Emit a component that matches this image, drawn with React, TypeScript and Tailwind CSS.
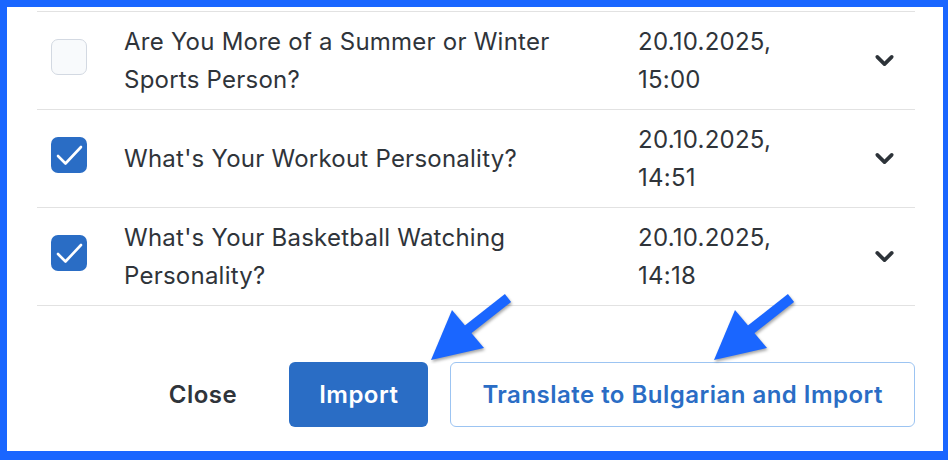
import { ChevronDown } from "lucide-react";

type Quiz = {
  title: string;
  date: string;
  time: string;
  checked: boolean;
};

const quizzes: Quiz[] = [
  { title: "Are You More of a Summer or Winter Sports Person?", date: "20.10.2025,", time: "15:00", checked: false },
  { title: "What's Your Workout Personality?", date: "20.10.2025,", time: "14:51", checked: true },
  { title: "What's Your Basketball Watching Personality?", date: "20.10.2025,", time: "14:18", checked: true },
];

function Checkbox({ checked }: { checked: boolean }) {
  if (!checked) {
    return <div className="w-[36px] h-[36px] rounded-[7px] border border-[#d3d9e2] bg-[#f8fafc]" />;
  }
  return (
    <div className="w-[36px] h-[36px] rounded-[7px] bg-[#2a6dc5]">
      <svg width="36" height="36" viewBox="0 0 36 36" fill="none">
        <path d="M7 19l7.5 7.5L30 10" stroke="white" strokeWidth="2.6" strokeLinecap="round" strokeLinejoin="round" />
      </svg>
    </div>
  );
}

function Arrow({ className }: { className: string }) {
  return (
    <svg className={className} width="90" height="72" viewBox="0 0 90 72" fill="none">
      <g style={{ filter: "drop-shadow(1px 2px 1.5px rgba(0,0,0,0.35))" }}>
        <line x1="80" y1="6" x2="38" y2="39" stroke="#1a66ff" strokeWidth="10" />
        <polygon points="3,68 24,18 56,56" fill="#1a66ff" />
      </g>
    </svg>
  );
}

export default function App() {
  return (
    <div
      className="w-[948px] h-[460px] bg-[#1a66ff] pt-[7px] pl-[7px] pr-[5px] pb-[9px]"
      style={{ fontFamily: "Inter, 'Noto Sans', sans-serif" }}
    >
      <div className="relative h-full bg-white pl-[30px] pr-[28px] pt-[4px] overflow-hidden">
        <div className="border-t border-[#e2e2e2]">
          {quizzes.map((q) => (
            <div
              key={q.title}
              className="flex items-center h-[98px] border-b border-[#e2e2e2] text-[#2f343a] text-[24px] leading-[38px] tracking-[0.01em]"
            >
              <div className="w-[87px] pl-[14px] shrink-0 -mt-[8px]">
                <Checkbox checked={q.checked} />
              </div>
              <div className="w-[514px] shrink-0 pr-[36px]">{q.title}</div>
              <div className="flex-1">
                <div>{q.date}</div>
                <div>{q.time}</div>
              </div>
              <div className="pr-[16px]">
                <ChevronDown size={29} strokeWidth={3} className="text-[#2d3339]" />
              </div>
            </div>
          ))}
        </div>

        <div className="flex justify-end gap-[22px] mt-[56px] text-[24px] font-semibold tracking-[0.02em]">
          <button type="button" className="h-[65px] px-[30px] rounded-[6px] text-[#2f343a]">
            Close
          </button>
          <button type="button" className="h-[65px] px-[30px] rounded-[6px] bg-[#2a6dc5] text-white">
            Import
          </button>
          <button type="button" className="h-[65px] px-[31px] rounded-[6px] border border-[#9cc4f2] text-[#2a6dc5]">
            Translate to Bulgarian and Import
          </button>
        </div>

        <Arrow className="absolute left-[421px] top-[285px]" />
        <Arrow className="absolute left-[704px] top-[285px]" />
      </div>
    </div>
  );
}
